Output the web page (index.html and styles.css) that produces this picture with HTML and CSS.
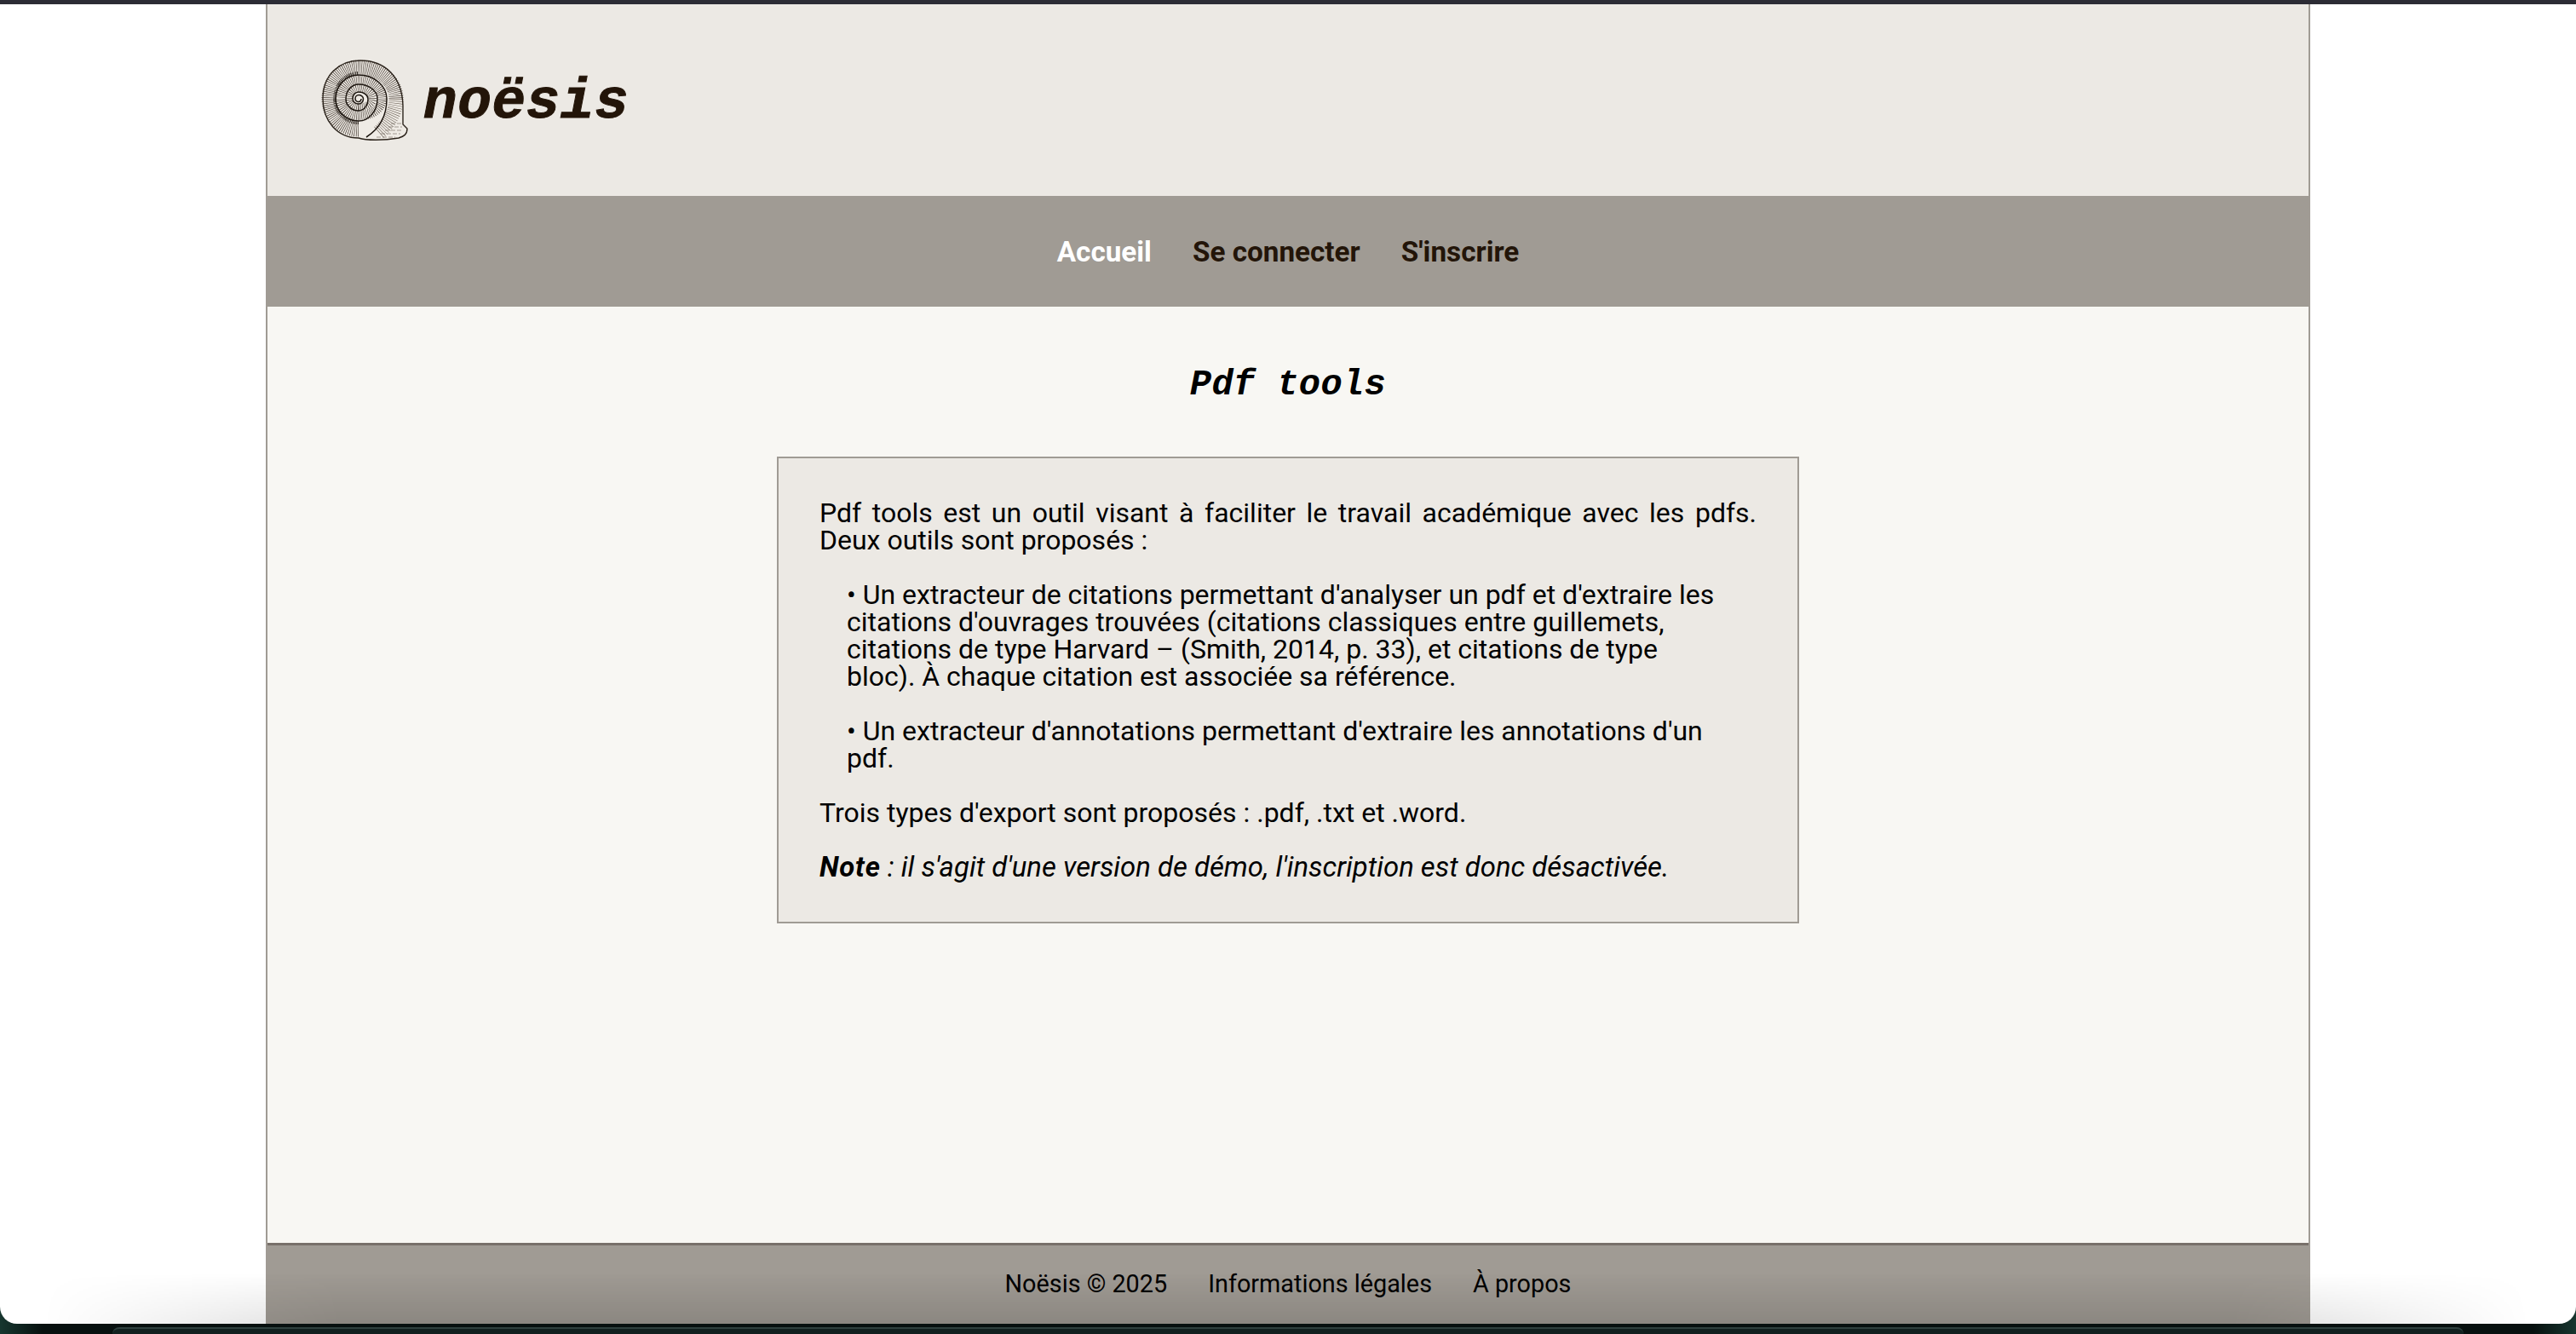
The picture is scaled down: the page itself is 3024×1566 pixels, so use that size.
FILE: index.html
```html
<!doctype html>
<html lang="fr">

<head>
  <meta charset="utf-8">
  <title>Noësis - Pdf tools</title>
  <link rel="stylesheet" href="styles.css">
</head>

<body>

  <div class="topbar"></div>

  <div class="window">
    <div id="page">

      <header class="site-header">
        <svg class="logo" xmlns="http://www.w3.org/2000/svg" width="104" height="100" viewBox="376 66 104 100">
          <!-- body of the shell and the lip -->
          <path class="shell" d="M379 114 C379 86 398 69 423 69 C452 69 472 88 473 122 L473 144 L478 149 C478 156 474 158 468 160 C450 163 430 163 421 160 C396 160 379 140 379 114 Z" />
          <!-- hatching, one band per turn of the spiral -->
          <path class="hatch band-a" d="M421 150 A35 36 0 0 1 386 114 A35 37 0 0 1 421 77 A44 37 0 0 1 465 114" />
          <path class="hatch band-a pale" d="M465 114 C465 128 458 142 444 154" />
          <path class="lip-lines" d="M442 159 H464 M447 155 H470 M452 151 H472 M456 147 H472 M459 143 H472" />
          <path class="hatch band-dark" d="M421 142 A28 28 0 0 1 393 114 A28 30 0 0 1 421 84" />
          <path class="hatch band-b" d="M421 134 A21 20 0 0 1 400 114 A21 22.5 0 0 1 421 91.5 A27.5 22.5 0 0 1 448.5 114 A27.5 20 0 0 1 421 134" />
          <path class="hatch band-c" d="M421 124 A11 10 0 0 1 410 114 A11 12.5 0 0 1 421 101.5 A16.5 12.5 0 0 1 437.5 114 A16.5 10 0 0 1 421 124" />
          <!-- suture, drawn from the middle outwards -->
          <path class="whorl" d="M424 114 A3 3.5 0 0 1 421 117.5 A4 3.5 0 0 1 417 114 A4 4.5 0 0 1 421 109.5 A5.5 4.5 0 0 1 426.5 114 A5.5 6 0 0 1 421 120 A7 6 0 0 1 414 114 A7 8 0 0 1 421 106 A11 8 0 0 1 432 114 A11 14 0 0 1 421 128 A15 14 0 0 1 406 114 A15 17 0 0 1 421 97 A22 17 0 0 1 443 114 A22 26 0 0 1 421 140 A27 26 0 0 1 394 114 A27 28 0 0 1 421 86 A33 28 0 0 1 454 114 C454 135 444 150 430 159" />
          <path class="outline" d="M379 114 C379 86 398 69 423 69 C452 69 472 88 473 122 L473 144 L478 149 C478 156 474 158 468 160 C450 163 430 163 421 160 C396 160 379 140 379 114 Z" />
        </svg>
        <span class="site-name">noësis</span>
      </header>

      <nav class="site-nav">
        <a class="active" href="#">Accueil</a>
        <a href="#">Se connecter</a>
        <a href="#">S'inscrire</a>
      </nav>

      <main class="content">
        <h1>Pdf tools</h1>

        <section class="intro">
          <p class="justified">Pdf tools est un outil visant à faciliter le travail académique avec les pdfs. Deux outils sont proposés :</p>
          <ul>
            <li>Un extracteur de citations permettant d'analyser un pdf et d'extraire les citations d'ouvrages trouvées (citations classiques entre guillemets, citations de type Harvard – (Smith, 2014, p. 33), et citations de type bloc). À chaque citation est associée sa référence.</li>
            <li>Un extracteur d'annotations permettant d'extraire les annotations d'un pdf.</li>
          </ul>
          <p>Trois types d'export sont proposés : .pdf, .txt et .word.</p>
          <p class="note"><strong>Note</strong> : il s'agit d'une version de démo, l'inscription est donc désactivée.</p>
        </section>
      </main>

      <footer class="site-footer">
        <span>Noësis © 2025</span>
        <a href="#">Informations légales</a>
        <a href="#">À propos</a>
      </footer>

    </div>
    <div class="dock-shadow"></div>
  </div>

  <div class="dock"></div>

</body>

</html>
```

FILE: styles.css
```css
* {
  box-sizing: border-box;
}

html,
body {
  height: 100%;
}

body {
  margin: 0;
  display: flex;
  flex-direction: column;
  overflow: hidden;
  background: linear-gradient(to right, #17362f, #07100f 50px, #07100f 2974px, #17362f);
  font-family: Roboto, "Liberation Sans", sans-serif;
  font-size: 32px;
  line-height: 32px;
  color: #000;
}

a {
  text-decoration: none;
  color: inherit;
}

.topbar {
  height: 5px;
  flex: none;
  background: #2c2c35;
}

.window {
  flex: 1;
  min-height: 0;
  position: relative;
  background: #fff;
  overflow: hidden;
  border-radius: 0 0 20px 20px;
}

#page {
  width: 2400px;
  height: 100%;
  margin: 0 auto;
  display: flex;
  flex-direction: column;
  border-left: 2px solid #a09b94;
  border-right: 2px solid #a09b94;
  background: #f8f7f3;
}

.site-header {
  height: 225px;
  flex: none;
  display: flex;
  align-items: center;
  gap: 17px;
  padding-left: 62px;
  background: #ece9e4;
}

.logo {
  flex: none;
}

.shell {
  fill: #efebe5;
}

.lip-lines {
  fill: none;
  stroke: #6b6157;
  stroke-width: 0.6;
  stroke-dasharray: 5 2;
}

.hatch {
  fill: none;
  stroke: #3a3028;
  stroke-dasharray: 0.6 1.5;
}

.hatch.pale {
  stroke: #6f655b;
  stroke-dasharray: 0.6 1.9;
}

.hatch.band-dark {
  stroke: #1d1610;
  stroke-width: 4px;
  stroke-dasharray: 0.8 1.1;
}

.band-a {
  stroke-width: 17px;
}

.band-b {
  stroke-width: 11px;
}

.band-c {
  stroke-width: 9px;
}

.whorl {
  fill: none;
  stroke: #1d1610;
  stroke-width: 1.5;
}

.outline {
  fill: none;
  stroke: #2c241c;
  stroke-width: 1.4;
}

.site-name {
  padding-top: 6px;
  font-family: "Liberation Mono", monospace;
  font-size: 66px;
  font-weight: bold;
  font-style: italic;
  letter-spacing: 0.6px;
  color: #231509;
  -webkit-text-stroke: 1px #231509;
}

.site-nav {
  height: 130px;
  flex: none;
  display: flex;
  justify-content: center;
  align-items: center;
  gap: 48px;
  padding-top: 2px;
  background: #a09b94;
  font-size: 33.28px;
  font-weight: bold;
  color: #231509;
}

.site-nav .active {
  color: #fff;
}

.content {
  flex: 1;
  min-height: 0;
  padding-top: 64px;
}

h1 {
  margin: 0 0 56px;
  text-align: center;
  font-family: "Liberation Mono", monospace;
  font-size: 42px;
  line-height: 56px;
  font-weight: bold;
  font-style: italic;
  letter-spacing: 0.4px;
}

.intro {
  width: 1200px;
  margin: 0 auto;
  padding: 48px;
  background: #ece9e4;
  border: 2px solid #a09b94;
}

.intro p {
  margin: 0 0 32px;
}

.intro p:last-child {
  margin-bottom: 0;
}

.justified {
  text-align: justify;
}

.intro ul {
  margin: 0 0 32px;
  padding: 0 32px;
  list-style: none;
}

.intro li {
  margin-bottom: 32px;
}

.intro li:last-child {
  margin-bottom: 0;
}

.intro li::before {
  content: "• ";
}

.note {
  font-size: 32.9px;
  font-style: italic;
}

.note strong {
  letter-spacing: 0.8px;
}

.site-footer {
  height: 95px;
  flex: none;
  display: flex;
  justify-content: center;
  align-items: center;
  gap: 48px;
  padding-bottom: 2px;
  background: #a09b94;
  border-top: 3px solid #78706a;
  font-size: 28.8px;
}

/* the desktop dock darkens the bottom of the window */
.dock-shadow {
  position: absolute;
  left: 0;
  right: 0;
  bottom: 0;
  height: 60px;
  background: linear-gradient(to bottom, rgba(0, 0, 0, 0), rgba(0, 0, 0, 0.13));
  -webkit-mask-image: linear-gradient(to right, transparent 50px, #000 400px, #000 2620px, transparent 2970px);
  mask-image: linear-gradient(to right, transparent 50px, #000 400px, #000 2620px, transparent 2970px);
  pointer-events: none;
}

.dock {
  height: 8px;
  flex: none;
  margin: 4px 132px 0;
  background: #12201f;
  border-top: 2px solid #2f403e;
  border-radius: 18px 18px 0 0;
}
```
